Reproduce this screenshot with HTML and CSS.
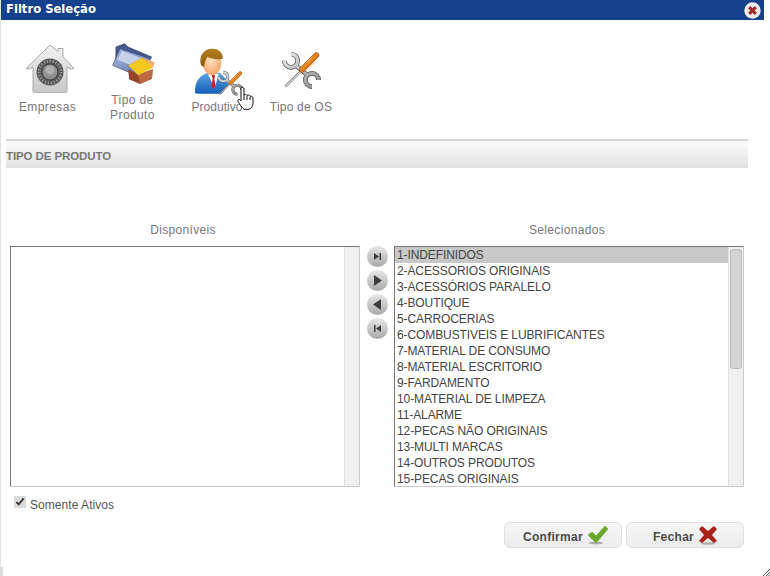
FILE: index.html
```html
<!DOCTYPE html>
<html lang="pt">
<head>
<meta charset="utf-8">
<title>Filtro Seleção</title>
<link rel="stylesheet" href="styles.css">
</head>
<body>
<svg class="defs" width="0" height="0" aria-hidden="true">
  <defs>
    <linearGradient id="steel" x1="0" y1="0" x2="1" y2="1"><stop offset="0" stop-color="#e8e8e8"/><stop offset="1" stop-color="#8a8a8a"/></linearGradient>
    <linearGradient id="orange" x1="0" y1="0" x2="1" y2="1"><stop offset="0" stop-color="#f7a63a"/><stop offset="1" stop-color="#d0620c"/></linearGradient>
    <linearGradient id="houseFill" x1="0" y1="0" x2="0" y2="1"><stop offset="0" stop-color="#f2f2f2"/><stop offset="1" stop-color="#c8c8c8"/></linearGradient>
    <linearGradient id="suit" x1="0" y1="0" x2="0" y2="1"><stop offset="0" stop-color="#5fa6e6"/><stop offset="1" stop-color="#1560b8"/></linearGradient>
    <radialGradient id="skin" cx=".45" cy=".4" r=".7"><stop offset="0" stop-color="#ffe2bf"/><stop offset="1" stop-color="#f39a5c"/></radialGradient>
    <linearGradient id="hair" x1="0" y1="0" x2="0" y2="1"><stop offset="0" stop-color="#b5801e"/><stop offset="1" stop-color="#8a5a12"/></linearGradient>
    <linearGradient id="folder" x1="0" y1="0" x2="1" y2="1"><stop offset="0" stop-color="#a9bbe2"/><stop offset="1" stop-color="#5a6d9e"/></linearGradient>
    <symbol id="tools" viewBox="845 148 120 120">
      <path d="M872 160A20 20 0 1 1 852 180M955 238A20 20 0 1 0 935 258M886 194L921 224" fill="none" stroke="#4d4d4d" stroke-width="14"/>
      <path d="M872 160A20 20 0 1 1 852 180M955 238A20 20 0 1 0 935 258M886 194L921 224" fill="none" stroke="url(#steel)" stroke-width="10"/>
      <path d="M855 258L906 207" stroke="#555" stroke-width="7"/>
      <path d="M855 258L906 207" stroke="#e2e2e2" stroke-width="4"/>
      <path d="M905 207L948 164" stroke="#9a4a08" stroke-width="17" stroke-linecap="round"/>
      <path d="M905 207L948 164" stroke="url(#orange)" stroke-width="14" stroke-linecap="round"/>
      <path d="M920 186l14-14M932 198l14-14" stroke="#ffc878" stroke-width="2.500"/>
    </symbol>
  </defs>
</svg>
<div class="window">
  <header class="titlebar">
    <span class="title">Filtro Seleção</span>
    <svg class="close" width="17" height="17" viewBox="0 0 17 17"><circle cx="8.500" cy="8.500" r="8.200" fill="#f2f0ee"/><path d="M5.200 5.200l6.600 6.600M11.800 5.200l-6.600 6.600" stroke="#a52a2e" stroke-width="3.200"/></svg>
  </header>

  <nav class="toolbar">
    <div class="tool tool-house">
      <svg class="icon" width="48" height="48" viewBox="0 0 48 48">
        <path d="M24 0l8 6.500V3.500h5v8L48 23.500 44.500 24 41 22v24.500l-1.500 1.500h-31L7 46.500V22l-3.500 2L0 23.500z" fill="url(#houseFill)" stroke="#a8a8a8"/>
        <circle cx="24" cy="27" r="13.500" fill="#555"/>
        <circle cx="24" cy="27" r="11" fill="none" stroke="#8b8b8b" stroke-width="3" stroke-dasharray="1.500 1.500"/>
        <circle cx="24" cy="27" r="8" fill="#8f8f8f" stroke="#3d3d3d"/>
        <circle cx="24" cy="25" r="4.500" fill="#b0b0b0"/>
      </svg>
      <span class="tool-label">Empresas</span>
    </div>
    <div class="tool tool-box">
      <svg class="icon" width="48" height="48" viewBox="330 128 144 144">
        <path d="M348 140l26-10 10 10 71 30-38 56-70-30z" fill="#46598a" stroke="#2e3c60" stroke-width="2"/>
        <path d="M338 195l22-50 92 30-44 50z" fill="url(#folder)" stroke="#3d4d75" stroke-width="2"/>
        <path d="M352 178l14-25 70 24-30 22z" fill="#d5dff2" opacity=".8"/>
        <path d="M385 207l30 16 43-16-2 28-36 16-33-14z" fill="#96452a"/>
        <path d="M415 223l43-16-2 28-36 16z" fill="#bd6a42"/>
        <path d="M385 195l43-23 32 28-45 25z" fill="#f4c81e" stroke="#caa012"/>
        <path d="M428 172l35 14-3 14z" fill="#f3a878"/>
      </svg>
      <span class="tool-label">Tipo de<br>Produto</span>
    </div>
    <div class="tool tool-man">
      <svg class="icon" width="50" height="50" viewBox="580 140 150 150">
        <path d="M583 278c-3-40 20-58 50-64l25 4 30 30-25 32h-72z" fill="url(#suit)"/>
        <path d="M622 222l32-2-12 44z" fill="#fff"/>
        <path d="M633 224h10l-2 12 4 22-6 8-6-8 3-22z" fill="#c21f2b"/>
        <ellipse cx="634" cy="188" rx="28" ry="36" fill="url(#skin)"/>
        <path d="M602 196c-10-28 8-52 34-51 20 0 32 14 30 30-16 4-34 0-46-6-6 8-8 18-9 30z" fill="url(#hair)"/>
        <use href="#tools" x="650" y="208" width="80" height="80"/>
      </svg>
      <span class="tool-label">Produtivo</span>
      <svg class="cursor" width="18" height="24" viewBox="0 0 18 24">
        <path d="M4 1.500c1.500-1 3 0 3 1.500v6c1-1 2.500-.5 3 .5 1-1 2.500-.5 3 .8 1.500-.6 3 .2 3 2v5c0 3-2 5.500-4 6H7c-1.500-1-5-6-6-8-.5-1.500 1-2.500 2-1.500l1 1z" fill="#fff" stroke="#111" stroke-width="1"/>
        <path d="M7 9v5M10 10v4M13 11v3" stroke="#111"/>
      </svg>
    </div>
    <div class="tool tool-os">
      <svg class="icon" width="40" height="40" viewBox="0 0 40 40"><use href="#tools" width="40" height="40"/></svg>
      <span class="tool-label">Tipo de OS</span>
    </div>
  </nav>

  <h2 class="section">TIPO DE PRODUTO</h2>

  <div class="picker">
    <section class="col">
      <h3 class="col-title">Disponíveis</h3>
      <div class="listbox">
        <div class="rows"></div>
        <div class="scrollbar"></div>
      </div>
    </section>

    <div class="movers">
      <button class="mover" aria-label="Mover todos"><svg width="9" height="9" viewBox="0 0 9 9"><path d="M1 1l5 3.500-5 3.500zM6.500 1H8v7H6.500z"/></svg></button>
      <button class="mover" aria-label="Mover"><svg width="9" height="11" viewBox="0 0 9 11"><path d="M1 0l8 5.500-8 5.500z"/></svg></button>
      <button class="mover" aria-label="Voltar"><svg width="9" height="11" viewBox="0 0 9 11"><path d="M8 0L0 5.500 8 11z"/></svg></button>
      <button class="mover" aria-label="Voltar todos"><svg width="9" height="9" viewBox="0 0 9 9"><path d="M8 1L3 4.500 8 8zM1 1h1.500v7H1z"/></svg></button>
    </div>

    <section class="col">
      <h3 class="col-title">Selecionados</h3>
      <div class="listbox">
        <div class="rows">
          <div class="row row-selected">1-INDEFINIDOS</div>
          <div class="row">2-ACESSORIOS ORIGINAIS</div>
          <div class="row">3-ACESSÓRIOS PARALELO</div>
          <div class="row">4-BOUTIQUE</div>
          <div class="row">5-CARROCERIAS</div>
          <div class="row">6-COMBUSTIVEIS E LUBRIFICANTES</div>
          <div class="row">7-MATERIAL DE CONSUMO</div>
          <div class="row">8-MATERIAL ESCRITORIO</div>
          <div class="row">9-FARDAMENTO</div>
          <div class="row">10-MATERIAL DE LIMPEZA</div>
          <div class="row">11-ALARME</div>
          <div class="row">12-PECAS NÃO ORIGINAIS</div>
          <div class="row">13-MULTI MARCAS</div>
          <div class="row">14-OUTROS PRODUTOS</div>
          <div class="row">15-PECAS ORIGINAIS</div>
        </div>
        <div class="scrollbar"><div class="thumb"></div></div>
      </div>
    </section>
  </div>

  <label class="active-only"><input type="checkbox" checked><span>Somente Ativos</span></label>

  <footer class="actions">
    <button class="action action-confirm"><span>Confirmar</span>
      <svg width="22" height="20" viewBox="0 0 22 20"><ellipse cx="9" cy="18" rx="7" ry="1.500" fill="#aaa"/><path d="M1 10l4-3 4 4L18 1l3 3L9 18z" fill="#6aa82a" stroke="#5c9a22" stroke-width=".5"/></svg>
    </button>
    <button class="action action-close"><span>Fechar</span>
      <svg width="20" height="20" viewBox="0 0 20 20"><ellipse cx="10" cy="18.500" rx="7" ry="1.300" fill="#aaa"/><path d="M1 4l3-3 6 5 6-5 3 3-5 6 5 6-3 2-6-5-6 5-3-2 5-6z" fill="#a82218"/></svg>
    </button>
  </footer>
</div>
<div class="corner-mark"></div>
<svg class="grip" width="7" height="7" viewBox="0 0 7 7"><path d="M0 7l7-7M3 7l4-4M5.500 7L7 5.500" stroke="#555" stroke-width="1"/></svg>
</body>
</html>
```

FILE: styles.css
```css
* { box-sizing: border-box; }
html, body { height: 100%; }
body {
  margin: 0;
  background: #fff;
  font-family: "Liberation Sans", Arial, sans-serif;
  color: #666;
  overflow: hidden;
  position: relative;
}
.defs { display: block; height: 0; }
.window {
  width: 764px;
  height: 576px;
  border-left: 1px solid #e2e2e2;
}
.titlebar {
  height: 20px;
  background: #15418c;
  display: flex;
  align-items: flex-start;
  justify-content: space-between;
  padding: 0 3px 0 5px;
}
.title {
  font: bold 11.600px/18px "DejaVu Sans", sans-serif;
  color: #fff;
}
.close { margin-top: 2px; }

.toolbar {
  height: 119px;
  display: flex;
  padding: 22px 0 0 4px;
}
.tool {
  position: relative;
  display: flex;
  flex-direction: column;
  align-items: center;
  font-size: 12px;
  letter-spacing: .4px;
  color: #777;
}
.tool-label {
  height: 30px;
  display: flex;
  align-items: center;
  text-align: center;
  line-height: 15px;
}
.tool-house { width: 85px; padding-top: 3px; }
.tool-house .icon { margin-left: 5px; }
.tool-house .tool-label { margin-top: -1px; }
.tool-box { width: 85px; padding-top: 1px; }
.tool-box .icon { margin: 0 0 2px 2px; }
.tool-man { width: 84px; padding-top: 5px; letter-spacing: .05px; }
.tool-man .icon { margin: 0 0 -5px 3px; }
.tool-os { width: 84px; padding-top: 8px; letter-spacing: .2px; }
.tool-os .icon { margin: 0 0 2px 2px; }
.cursor { position: absolute; left: 62px; top: 44px; }

.section {
  margin: 0 16px 0 5px;
  height: 29px;
  border-top: 2px solid #d4d4d4;
  background: linear-gradient(#fbfbfb, #e2e2e2);
  font-size: 11.500px;
  line-height: 31px;
  color: #777;
  font-weight: bold;
  letter-spacing: -.1px;
}

.picker {
  display: flex;
  padding: 53px 0 0 9px;
}
.col { width: 350px; }
.col-title {
  margin: 0;
  height: 25px;
  padding-right: 4px;
  font-size: 12px;
  font-weight: normal;
  line-height: 19px;
  letter-spacing: .33px;
  text-align: center;
  color: #777;
}
.listbox {
  height: 241px;
  display: flex;
  border: 1px solid #ccc;
  border-top-color: #777;
  border-left-color: #777;
  overflow: hidden;
}
.rows { flex: 1; min-width: 0; }
.row {
  height: 16px;
  font-size: 12px;
  line-height: 16px;
  padding-left: 2px;
  color: #444;
  white-space: nowrap;
  letter-spacing: -.1px;
}
.row-selected { background: #c8c8c8; }
.scrollbar {
  width: 15px;
  background: #f0f0f0;
  border-left: 1px solid #e2e2e2;
  padding: 2px 1px;
}
.thumb {
  height: 120px;
  background: #d4d4d4;
  border: 1px solid #bdbdbd;
  border-radius: 3px;
}

.movers {
  width: 34px;
  padding-top: 25px;
  display: flex;
  flex-direction: column;
  align-items: center;
  gap: 3px;
}
.mover {
  width: 21px;
  height: 21px;
  padding: 0;
  border: 0;
  border-radius: 50%;
  background: linear-gradient(#e8e8e8, #a9a9a9);
  display: flex;
  align-items: center;
  justify-content: center;
}
.mover svg { fill: #3d3d3d; }

.active-only {
  display: flex;
  align-items: flex-start;
  gap: 4px;
  margin: 9px 0 0 13px;
  height: 14px;
  font-size: 12px;
  letter-spacing: .05px;
  color: #555;
}
.active-only span { line-height: 14px; padding-top: 2px; }
.active-only input {
  width: 12px;
  height: 12px;
  margin: 0;
  accent-color: #dcdcdc;
}

.actions {
  display: flex;
  justify-content: flex-end;
  gap: 4px;
  margin-top: 12px;
  padding-right: 20px;
}
.action {
  width: 118px;
  height: 26px;
  padding: 0;
  border: 1px solid #e0e0e0;
  border-radius: 6px;
  background: linear-gradient(#f6f6f6, #ececec);
  font: bold 12px "Liberation Sans", Arial, sans-serif;
  letter-spacing: .3px;
  color: #4a4a4a;
  display: flex;
  align-items: center;
  justify-content: center;
  gap: 4px;
}
.action span { padding-top: 4px; }
.action-confirm { padding-left: 6px; }
.action-close { padding-left: 1px; }
.corner-mark {
  position: absolute;
  left: 0;
  bottom: 0;
  width: 3px;
  height: 9px;
  background: #dcdcdc;
}
.grip { position: absolute; right: 0; bottom: 0; }
```
